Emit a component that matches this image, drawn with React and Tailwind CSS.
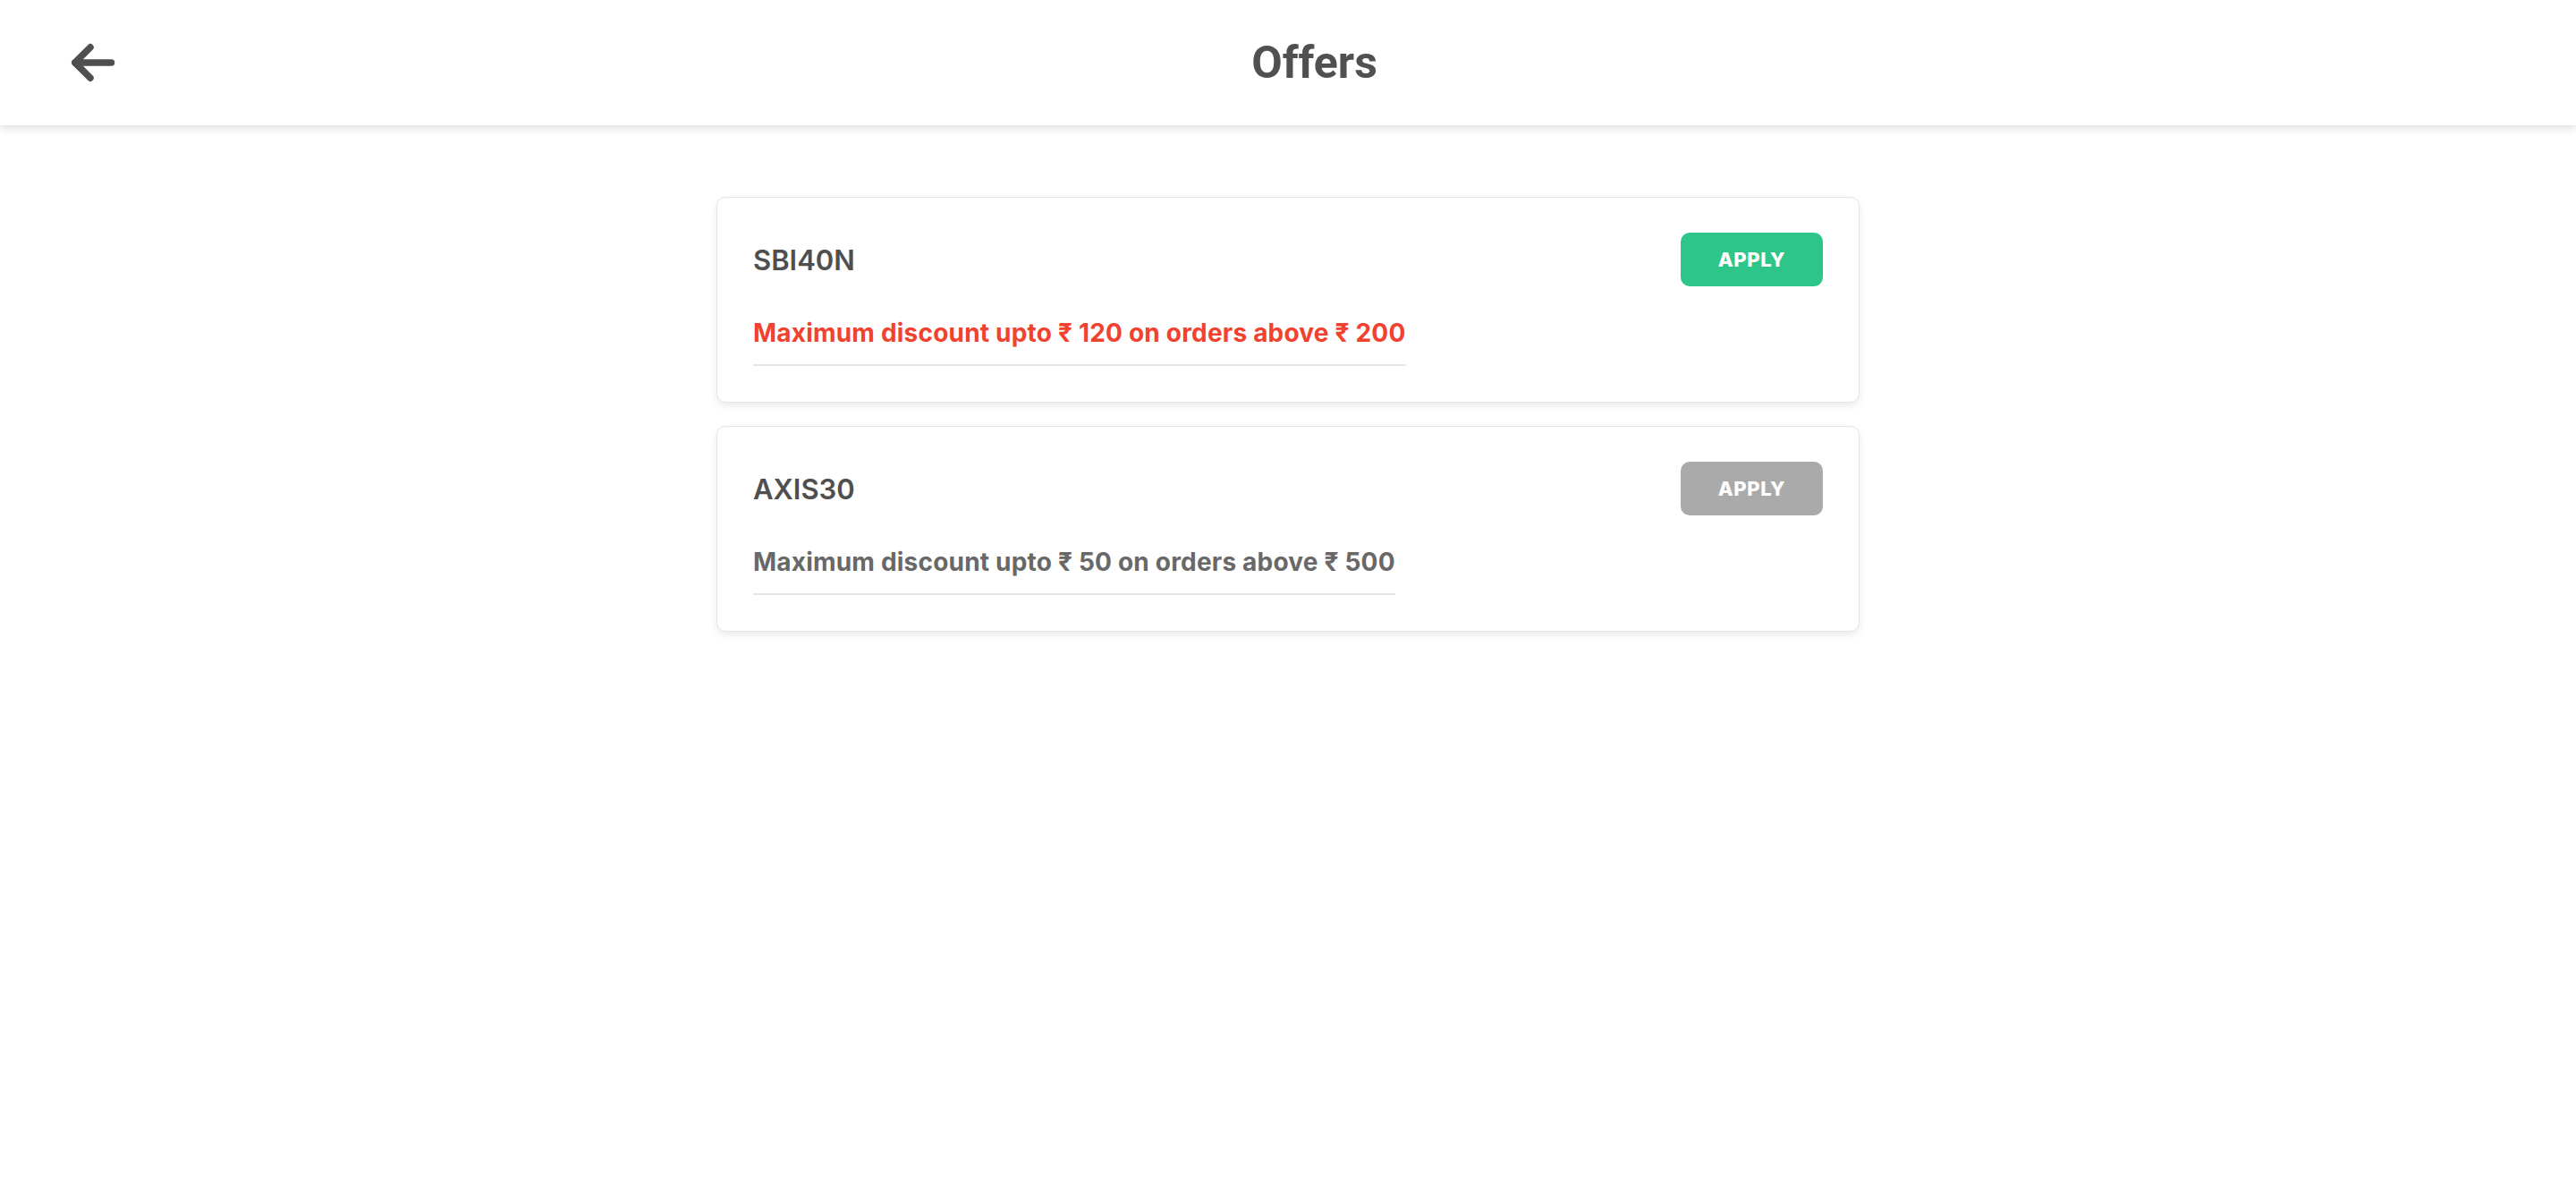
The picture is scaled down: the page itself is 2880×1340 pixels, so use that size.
import React from "react";

const offers = [
  { code: "SBI40N", desc: "Maximum discount upto ₹ 120 on orders above ₹ 200", active: true },
  { code: "AXIS30", desc: "Maximum discount upto ₹ 50 on orders above ₹ 500", active: false },
];

function BackArrow() {
  return (
    <svg width="48" height="42" viewBox="0 0 48 42" fill="none" stroke="#4f4f4f" strokeWidth="7.5" strokeLinecap="round" strokeLinejoin="round" className="overflow-visible">
      <path d="M44.5 21H4" />
      <path d="M21 3.8L3.8 21L21 38.2" />
    </svg>
  );
}

function OfferCard({ code, desc, active }) {
  return (
    <div className="bg-white border border-[#e3e5ea] rounded-[10px] shadow-[0_4px_8px_rgba(0,0,0,0.08)] pt-[39px] pb-[40px] pl-10 pr-10">
      <div className="flex items-center justify-between h-[60px]">
        <span className="text-[31px] font-semibold text-[#4f4f4f] leading-none">{code}</span>
        <button
          className={
            active
              ? "w-[159px] h-[60px] rounded-[10px] bg-[#2dc58a] text-white text-[22px] font-extrabold tracking-[0.03em]"
              : "w-[159px] h-[60px] rounded-[10px] bg-[#aaaaaa] text-white text-[22px] font-extrabold tracking-[0.03em]"
          }
        >
          APPLY
        </button>
      </div>
      <div className="mt-[34px]">
        <span
          className={
            active
              ? "inline-block text-[28px] leading-[37px] tracking-[0.2px] font-bold text-[#f1412f] pb-[16px] border-b-2 border-[#e3e5ea]"
              : "inline-block text-[28px] leading-[37px] tracking-[0.2px] font-bold text-[#686868] pb-[16px] border-b-2 border-[#e3e5ea]"
          }
        >
          {desc}
        </span>
      </div>
    </div>
  );
}

export default function App() {
  return (
    <div className="min-h-[1340px] bg-white font-['Inter','Noto_Sans',sans-serif]">
      <header className="h-[140px] bg-white shadow-[0_4px_10px_rgba(0,0,0,0.12)] flex items-center pl-[80px] relative z-10">
        <BackArrow />
        <h1 className="flex-1 text-center pr-[69px] text-[50px] font-bold text-[#505050] font-['Roboto',sans-serif] leading-none">
          Offers
        </h1>
      </header>
      <main className="w-[1278px] mx-auto pt-[80px] flex flex-col gap-[26px]">
        {offers.map((o) => (
          <OfferCard key={o.code} {...o} />
        ))}
      </main>
    </div>
  );
}
